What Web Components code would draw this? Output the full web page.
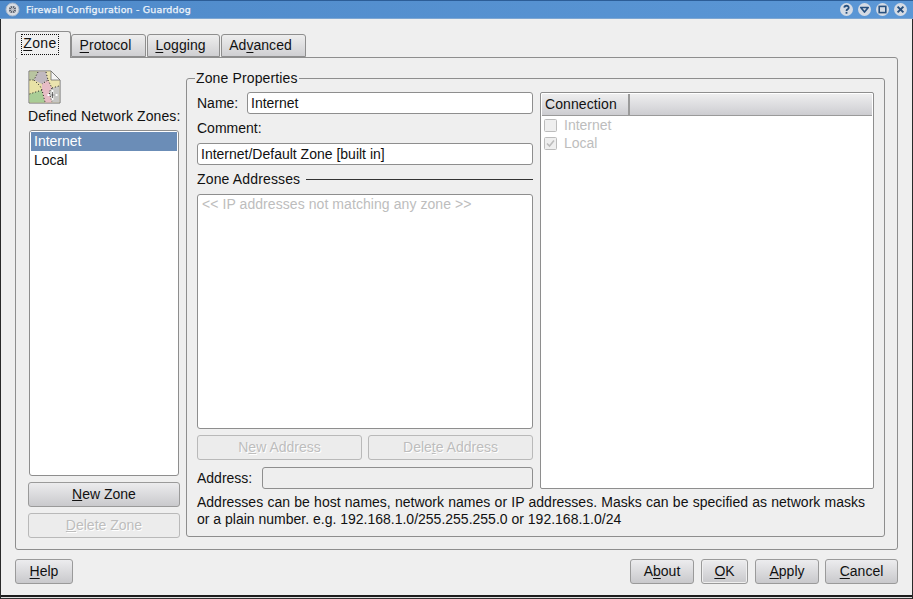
<!DOCTYPE html>
<html><head><meta charset="utf-8"><style>
html,body{margin:0;padding:0;width:913px;height:599px;overflow:hidden;background:#efefef}
body{font:14px/17px "Liberation Sans",sans-serif;color:#111}
u{text-underline-offset:2px}
</style></head><body>
<kde-window caption="Firewall Configuration - Guarddog">
  <kde-tabs>
    <kde-tab slot="tabs" active w="56"><span class="f"><u>Z</u>one</span></kde-tab>
    <kde-tab slot="tabs" w="75"><u>P</u>rotocol</kde-tab>
    <kde-tab slot="tabs" w="73"><u>L</u>ogging</kde-tab>
    <kde-tab slot="tabs" w="85">Ad<u>v</u>anced</kde-tab>
    <zone-page></zone-page>
  </kde-tabs>
  <dialog-footer slot="footer">
    <kde-button w="58"><u>H</u>elp</kde-button>
    <flex-gap></flex-gap>
    <kde-button w="64">A<u>b</u>out</kde-button>
    <kde-button w="47" def style="margin-left:7px"><u>O</u>K</kde-button>
    <kde-button w="64" style="margin-left:7px"><u>A</u>pply</kde-button>
    <kde-button w="73" style="margin-left:6px"><u>C</u>ancel</kde-button>
  </dialog-footer>
</kde-window>

<script>
function def(name, css, html, init){
  customElements.define(name, class extends HTMLElement{
    constructor(){super();this.attachShadow({mode:'open'}).innerHTML='<style>'+css+'</style>'+html;}
    connectedCallback(){ if(this.hasAttribute('w')) this.style.width=this.getAttribute('w')+'px'; if(init) init.call(this);}
  });
}

const FIELD='border:1px solid #8e8e8e;border-radius:3px;box-sizing:border-box;background:#fff;';

def('kde-window',`
 :host{display:flex;flex-direction:column;width:913px;height:599px;box-sizing:border-box;background:#efefef;border:1px solid #2a2a2a;border-bottom:0;border-top:0}
 .bar{height:19px;flex:none;display:flex;align-items:center;background:linear-gradient(90deg,#4f8aca 0%,#5b97d6 100%);border-top:1px solid #2c5d97;border-bottom:1px solid #7da6d2;box-sizing:border-box;margin:0 -1px;color:#eef4fb;font:bold 9.5px "DejaVu Sans",sans-serif;letter-spacing:.16px;padding:0 5px}
 .cap{margin-left:6px;flex:1;font-weight:normal;-webkit-text-stroke:.25px #eef4fb}
 .btns{display:flex;gap:3px}
 .btns svg{display:block}
 .main{flex:1;display:flex;flex-direction:column;padding:12px 14px 0 14px;min-height:0}
 .foot{height:36px;flex:none;padding-top:9px;box-sizing:border-box}
 .grip{flex:none;height:4px;margin:auto -14px 0;border-top:2px solid #1c1c1c;border-bottom:1px solid #333;background:#dcdcdc;box-sizing:border-box}
`,`
 <div class="bar">
  <svg width="15" height="15" viewBox="0 0 15 15"><circle cx="7.5" cy="7.5" r="6.5" fill="#d8dce2" stroke="#a5b6cb"/><circle cx="7.5" cy="7.5" r="3.5" fill="#59606c"/><path d="M5 5l5 5M10 5l-5 5M7.5 4v7M4 7.5h7" stroke="#c8ccd2" stroke-width=".8"/></svg>
  <span class="cap"></span>
  <span class="btns">
   <svg width="15" height="15" viewBox="0 0 15 15"><circle cx="7.5" cy="7.5" r="6.5" fill="#d5dbe4"/><path d="M5.3 5.6c.2-2.6 4.5-2.4 4.4.1 0 1.6-2.2 1.6-2.2 3.2" fill="none" stroke="#27507f" stroke-width="1.8"/><rect x="6.6" y="9.9" width="1.8" height="1.8" fill="#27507f"/></svg>
   <svg width="15" height="15" viewBox="0 0 15 15"><circle cx="7.5" cy="7.5" r="6.5" fill="#d5dbe4"/><path d="M3.8 5.5h7.4L7.5 10z" fill="none" stroke="#27507f" stroke-width="1.7" stroke-linejoin="round"/></svg>
   <svg width="15" height="15" viewBox="0 0 15 15"><circle cx="7.5" cy="7.5" r="6.5" fill="#d5dbe4"/><rect x="4.2" y="4.4" width="6.6" height="6.2" fill="none" stroke="#27507f" stroke-width="1.6"/></svg>
   <svg width="15" height="15" viewBox="0 0 15 15"><circle cx="7.5" cy="7.5" r="6.5" fill="#d5dbe4"/><path d="M4.6 4.6l5.8 5.8M10.4 4.6l-5.8 5.8" stroke="#27507f" stroke-width="2"/></svg>
  </span>
 </div>
 <div class="main"><slot></slot><div class="foot"><slot name="footer"></slot></div><div class="grip"></div></div>
`,function(){this.shadowRoot.querySelector('.cap').textContent=this.getAttribute('caption');});

def('kde-tabs',`
 :host{display:block;flex:none}
 .tabs{display:flex;height:26px;align-items:flex-end;position:relative;z-index:1;padding-left:0}
 .pane{height:493px;box-sizing:border-box;border:1px solid #8e8e8e;border-radius:3px;padding:12px 12px 11px 12px}
`,`<div class="tabs"><slot name="tabs"></slot></div><div class="pane"><slot></slot></div>`);

def('kde-tab',`
 :host{display:flex;align-items:center;justify-content:center;box-sizing:border-box;height:23px;margin-right:1px;border:1px solid #8e8e8e;border-bottom:1px solid #8e8e8e;border-radius:3px 3px 0 0;background:linear-gradient(#eeeeee,#cfcfd2);padding:0 6px 0 0;letter-spacing:.05px}
 :host([active]){height:27px;margin-bottom:-1px;margin-right:0;background:#efefef;border-bottom:0;padding:0 6px 1px 0;letter-spacing:.4px}
 ::slotted(.f){outline:1px dotted #111;outline-offset:0;padding:0 1px 2px}
`,`<slot></slot>`);

def('kde-button',`
 :host{display:inline-flex;box-sizing:border-box;height:25px;align-items:center;justify-content:center;border:1px solid #9a9a9a;border-radius:3px;background:linear-gradient(#ececee,#c9c9cc);vertical-align:top}
 :host([def]){box-shadow:inset 0 0 0 1px #efefef}
 :host([disabled]){background:#ececec;color:#bdbdbd;border-color:#b9b9b9;text-shadow:1px 1px 0 #fff}
`,`<slot></slot>`);

def('flex-gap',`:host{flex:1}`,``);
def('dialog-footer',`:host{display:flex;align-items:flex-start}`,`<slot></slot>`);

def('kde-input',`
 :host{display:flex;align-items:center;height:22px;box-sizing:border-box;padding:0 3px;${FIELD}white-space:nowrap}
 :host([disabled]){background:#eeeeee}
`,`<slot></slot>`);

def('kde-list',`
 :host{display:flex;flex-direction:column;box-sizing:border-box;padding:1px;${FIELD}}
`,`<slot></slot>`);
def('kde-item',`
 :host{display:block;height:19px;line-height:19px;padding:0 3px}
 :host([sel]){background:#6b8db7;color:#fff}
`,`<slot></slot>`);

def('check-row',`
 :host{display:flex;align-items:center;height:18px;color:#bdbdbd;padding-left:2px;gap:7px}
 svg{display:block;flex:none}
`,`<svg width="13" height="13" viewBox="0 0 13 13"><rect x=".5" y=".5" width="12" height="12" rx="1" fill="#efefef" stroke="#bcbcbc"/><path class="k" d="M3 6.5l2.5 2.6L10 3.6" fill="none" stroke="#bcbcbc" stroke-width="1.6"/></svg><slot></slot>`,
 function(){ if(!this.hasAttribute('checked')) this.shadowRoot.querySelector('.k').remove(); });

def('conn-view',`
 :host{display:flex;flex-direction:column;box-sizing:border-box;${FIELD}height:397px;padding:1px;background:#fff;border-radius:2px}
 .h{display:flex;height:22px;flex:none;background:linear-gradient(#eeeeef,#cdcdd1);border-bottom:1px solid #9a9a9a;box-sizing:border-box}
 .c{width:88px;box-sizing:border-box;border-right:2px solid #9a9a9a;padding-left:3px;line-height:21px;letter-spacing:.1px}
`,`<div class="h"><div class="c">Connection</div></div><div><slot></slot></div>`);

def('zone-icon',`:host{display:block;width:33px;height:36px}svg{display:block}`,
`<svg width="33" height="36" viewBox="0 0 33 36">
 <path d="M1 1H23L32 10V33H1Z" fill="#e7dca8" stroke="#6d6d6d"/>
 <path d="M1.5 1.5H10L6 10H1.5Z" fill="#b8c4a0"/>
 <path d="M1.5 10H6L12 16 14 20 1.5 24Z" fill="#e9e2a6"/>
 <path d="M1.5 24L14 20 17 32.5H1.5Z" fill="#a9cd96"/>
 <path d="M10 1.5H18L20 10 14 14 6 10Z" fill="#c0b8bf"/>
 <path d="M14 14L20 10 24 18 21 22 24 32.5H17L14 20Z" fill="#e7bcc5"/>
 <path d="M18 1.5H23L31.5 10V16L24 18 20 10Z" fill="#ebe3ae"/>
 <path d="M24 18L31.5 16V32.5H24L21 22Z" fill="#c6c6c4"/>
 <path d="M23 1L32 10H23Z" fill="#f5f5f5" stroke="#6d6d6d" stroke-width=".8"/>
 <path d="M10 2L6 10 12 16 14 20 17 32M1.5 10H6M1.5 24L14 20M18 2L20 10 14 14M20 10L24 18 21 22 24 32M24 18L31 16" fill="none" stroke="#222" stroke-width="1" stroke-dasharray="1 2"/>
 <path d="M24.5 20v10M19.5 25h10" stroke="#fff" stroke-width="1.8"/><path d="M24.5 22v6M21.5 25h6" stroke="#333" stroke-width=".7"/>
</svg>`);

def('titled-rule',`
 :host{display:flex;align-items:center;gap:6px;height:17px;letter-spacing:.15px}
 i{flex:1;height:1px;background:#333}
`,`<slot></slot><i></i>`);

def('zone-page',`
 :host{display:grid;grid-template-columns:152px 699px;column-gap:6px;height:468px;margin-top:0}
 .left{display:flex;flex-direction:column;height:468px}
 .lbl{height:17px;margin-top:2px;white-space:nowrap;letter-spacing:.1px}
 kde-list{margin:5px 1px 0 1px;height:346px;flex:none}
 .left kde-button{width:152px;flex:none}
 fieldset{margin:0;border:1px solid #8e8e8e;border-radius:3px;padding:6px 10px 0 10px;height:467px;box-sizing:border-box;min-width:0}
 legend{padding:0 1px;margin-left:-2px;line-height:16px;height:16px;letter-spacing:.13px}
 .cols{display:grid;grid-template-columns:336px 334px;column-gap:7px}
 .f{display:flex;flex-direction:column}
 .nm{display:flex;align-items:center;height:22px}
 .nm span{width:50px;flex:none}
 .nm kde-input{flex:1}
 .cm{height:17px;margin-top:6px;margin-bottom:6px}
 .ad{margin-top:6px}
 .box{height:235px;margin-top:6px;color:#bdbdbd;padding:0 4px;${FIELD}line-height:19px;letter-spacing:.07px}
 .btn{display:grid;grid-template-columns:165px 165px;column-gap:6px;margin-top:6px}
 .ar{display:flex;align-items:center;height:22px;margin-top:7px}
 .ar span{width:65px;flex:none}
 .ar kde-input{flex:1}
 p{margin:5px 0 0 0;line-height:17px;white-space:nowrap}
 p b{font-weight:normal;word-spacing:.38px}
`,`
 <div class="left">
  <zone-icon></zone-icon>
  <div class="lbl">Defined Network Zones:</div>
  <kde-list><kde-item sel>Internet</kde-item><kde-item>Local</kde-item></kde-list>
  <kde-button style="margin-top:6px"><u>N</u>ew Zone</kde-button>
  <kde-button disabled style="margin-top:6px"><u>D</u>elete Zone</kde-button>
 </div>
 <fieldset>
  <legend>Zone Properties</legend>
  <div class="cols">
   <div class="f">
    <div class="nm"><span>Name:</span><kde-input>Internet</kde-input></div>
    <div class="cm">Comment:</div>
    <kde-input>Internet/Default Zone [built in]</kde-input>
    <titled-rule class="ad">Zone Addresses</titled-rule>
    <div class="box">&lt;&lt; IP addresses not matching any zone &gt;&gt;</div>
    <div class="btn"><kde-button disabled>N<u>e</u>w Address</kde-button><kde-button disabled>Dele<u>t</u>e Address</kde-button></div>
    <div class="ar"><span>Address:</span><kde-input disabled></kde-input></div>
   </div>
   <conn-view><check-row>Internet</check-row><check-row checked>Local</check-row></conn-view>
  </div>
  <p><b>Addresses can be host names, network names or IP addresses. Masks can be specified as network masks</b><br>or a plain number. e.g. 192.168.1.0/255.255.255.0 or 192.168.1.0/24</p>
 </fieldset>
`);
</script>
</body></html>
